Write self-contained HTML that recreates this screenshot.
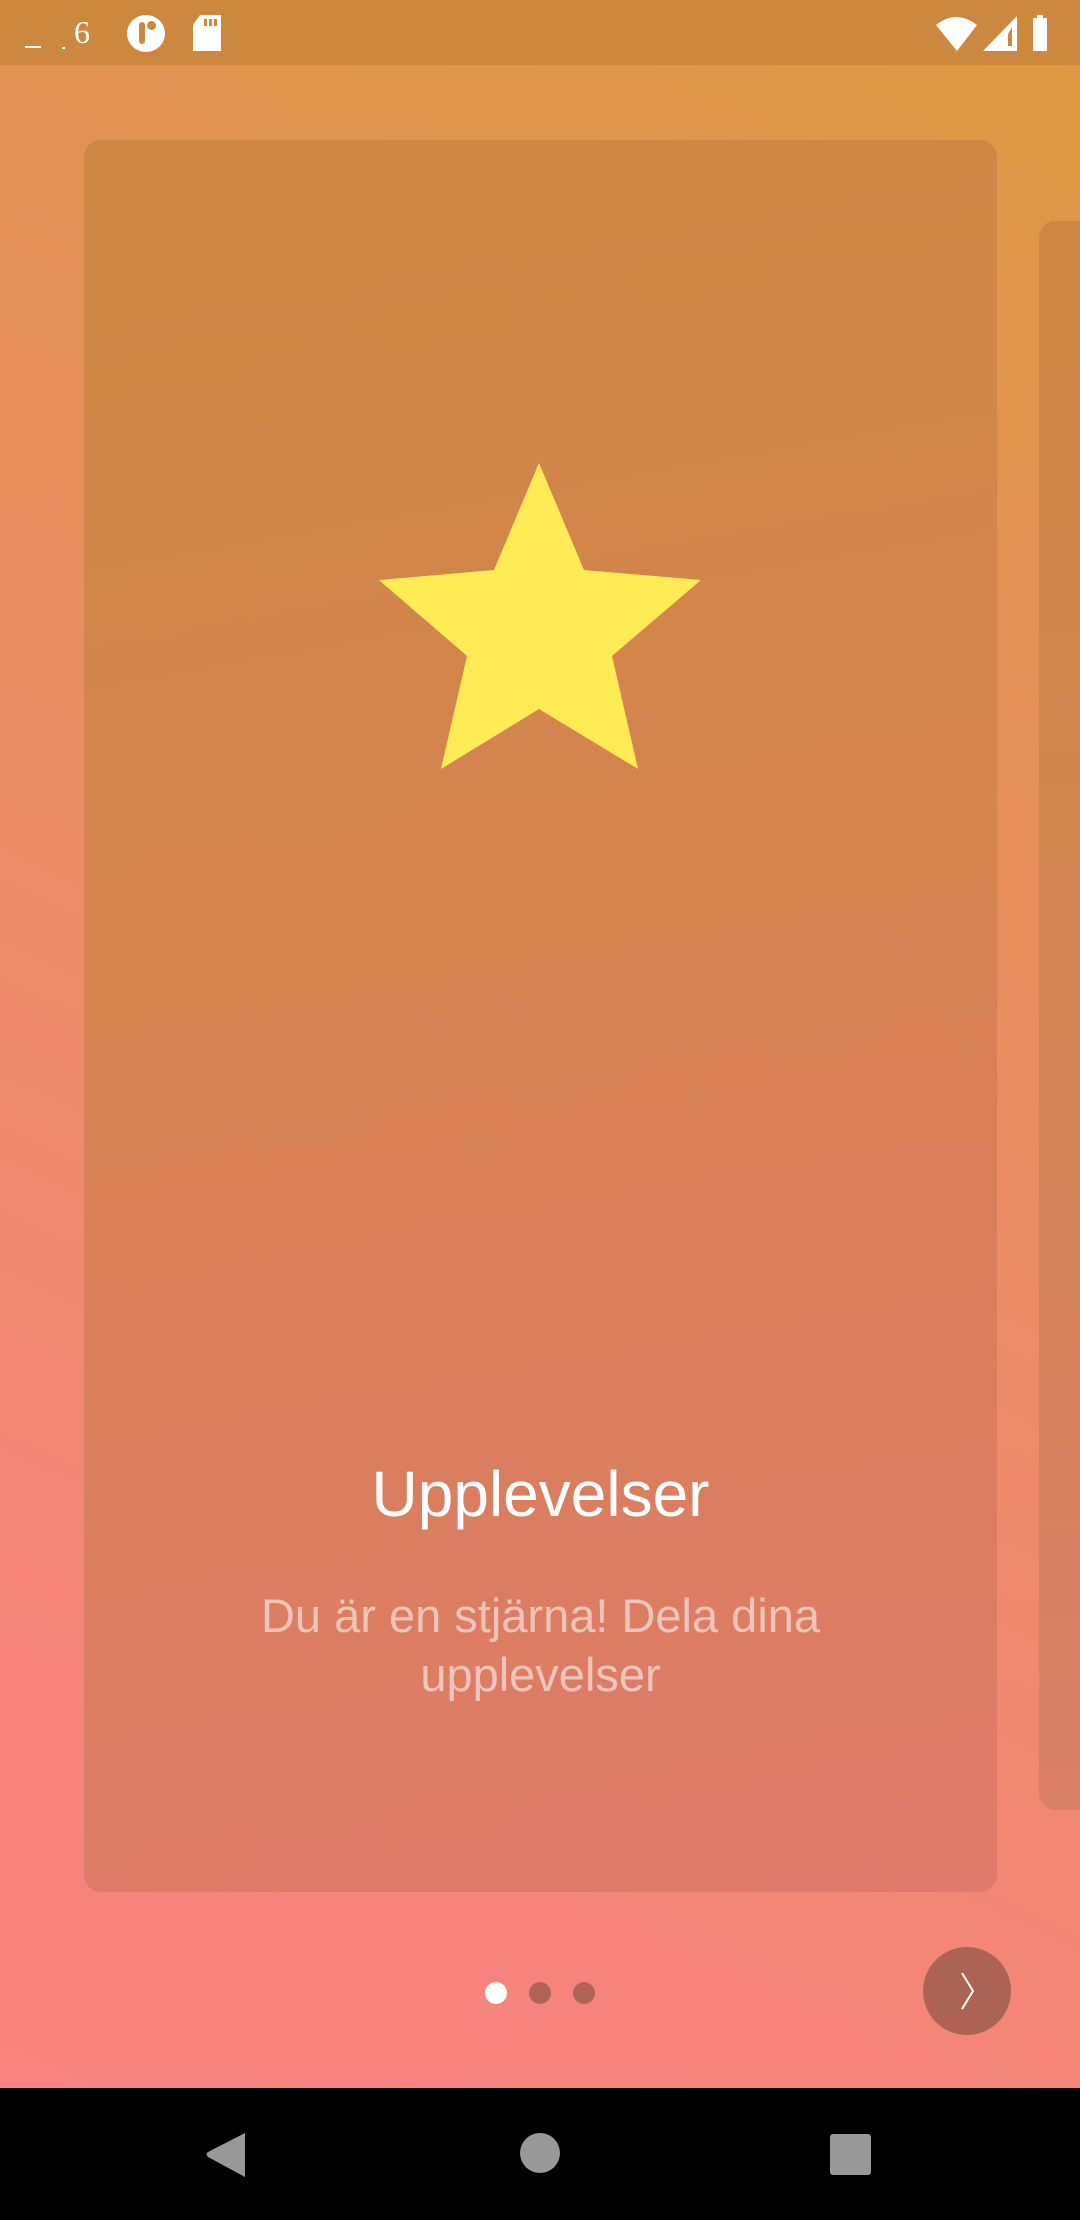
<!DOCTYPE html>
<html><head><meta charset="utf-8"><style>
html,body{margin:0;padding:0}
body{width:1080px;height:2220px;position:relative;overflow:hidden;font-family:"Liberation Sans",sans-serif;background:#000}
.bgfix{position:absolute;left:0;top:0;width:1080px;height:2088px;background:linear-gradient(205deg,#dc9a40 0%,#e4905a 30%,#ee8a6c 60%,#f7837f 90%,#f98482 100%)}
.status{position:absolute;left:0;top:0;width:1080px;height:65px;background:#cc883e}
.card{position:absolute;left:84px;top:140px;width:913px;height:1752px;border-radius:17px;background:linear-gradient(170deg,#cc8842 0%,#d5844f 40%,#df7a6c 100%)}
.card2{position:absolute;left:1039px;top:221px;width:60px;height:1589px;border-radius:17px;background:linear-gradient(180deg,#cc8842,#d98068)}
.title{position:absolute;left:84px;width:913px;top:1457px;text-align:center;color:#fff;font-size:64px}
.sub{position:absolute;left:84px;width:913px;top:1586px;text-align:center;color:rgba(255,255,255,.55);font-size:47px;line-height:59px}
.dot{position:absolute;width:22px;height:22px;border-radius:50%;top:1982px;background:#b06458}
.btn{position:absolute;left:923px;top:1947px;width:88px;height:88px;border-radius:50%;background:#ad6354}
.nav{position:absolute;left:0;top:2088px;width:1080px;height:132px;background:#000}
</style></head><body>
<div class="bgfix"></div>
<div class="status">
<div style="position:absolute;left:25px;top:46px;width:16px;height:2px;background:#fff"></div>
<div style="position:absolute;left:62px;top:47px;width:3px;height:2px;background:#fff"></div>
<div style="position:absolute;left:74px;top:14px;color:#fff;font-size:32px;font-family:'Liberation Serif',serif">6</div>
<div style="position:absolute;left:127px;top:15px;width:38px;height:37px;border-radius:50%;background:#fff"></div>
<div style="position:absolute;left:139px;top:22px;width:6px;height:22px;border-radius:3px;background:#cc883e"></div>
<div style="position:absolute;left:147px;top:21px;width:9px;height:9px;border-radius:50%;background:#cc883e"></div>
<svg style="position:absolute;left:192px;top:15px" width="30" height="37"><path d="M8 0H29V36H1V10Z" fill="#fff"/><rect x="12" y="4" width="3" height="7" fill="#cc883e"/><rect x="17" y="4" width="3" height="7" fill="#cc883e"/><rect x="22" y="4" width="3" height="7" fill="#cc883e"/></svg>
<svg style="position:absolute;left:935px;top:15px" width="125" height="37"><path d="M1 10Q21 -6 42 10L22 36Z" fill="#fff"/><path d="M48 36L82 1V36Z" fill="#fff"/><path d="M73 19V31H77V12Z" fill="#cc883e"/><rect x="102" y="0" width="6" height="4" fill="#fff"/><rect x="98" y="3" width="14" height="33" rx="1" fill="#fff"/></svg>
</div>
<div class="card"></div>
<div class="card2"></div>
<svg style="position:absolute;left:379px;top:463px" width="322" height="306" viewBox="0 0 322 306"><polygon points="160,0 205,107 322,117 233,193 259,306 160,246 62,306 88,193 0,117 115,107" fill="#ffeb55"/></svg>
<div class="title">Upplevelser</div>
<div class="sub">Du är en stjärna! Dela dina<br>upplevelser</div>
<div class="dot" style="left:485px;background:#fff"></div>
<div class="dot" style="left:529px"></div>
<div class="dot" style="left:573px"></div>
<div class="btn"><svg width="88" height="88"><path d="M39 26L50 44L39 62" stroke="#fff" stroke-width="2" fill="none"/></svg></div>
<div class="nav">
<svg style="position:absolute;left:205px;top:44px" width="42" height="46"><path d="M40 1V45L3 25Q0 22 3 20Z" fill="#999"/></svg>
<div style="position:absolute;left:520px;top:45px;width:40px;height:40px;border-radius:50%;background:#999"></div>
<div style="position:absolute;left:830px;top:46px;width:41px;height:41px;border-radius:3px;background:#999"></div>
</div>
</body></html>
